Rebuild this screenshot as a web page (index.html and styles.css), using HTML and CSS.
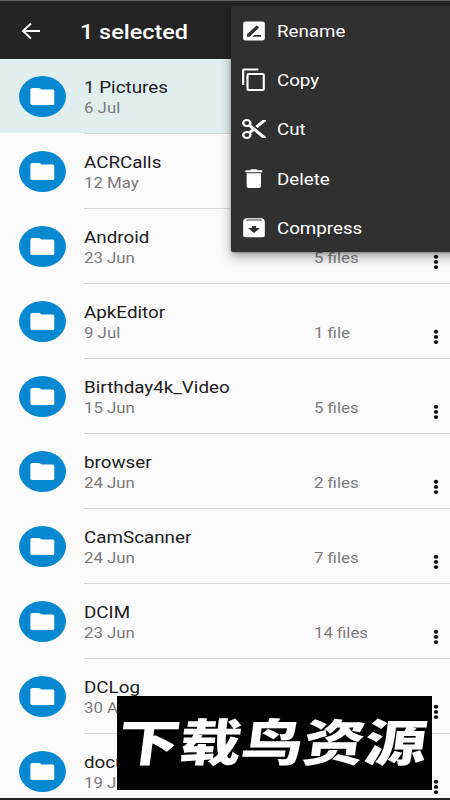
FILE: index.html
```
<!DOCTYPE html>
<html lang="en">
<head>
<meta charset="utf-8">
<title>File manager</title>
<link rel="stylesheet" href="styles.css">
</head>
<body>
<svg width="0" height="0" class="defs">
  <symbol id="folder" viewBox="0 0 47 41"><ellipse cx="23.5" cy="20.5" rx="23.5" ry="20.5" fill="#0788d1"/><path d="M13.200 12H19.800Q20.800 12 21.400 12.700L22.500 13.600H33.500Q35.300 13.600 35.300 15.200V27.500Q35.300 29 33.500 29H13.200Q11.400 29 11.400 27.500V13.600Q11.400 12 13.200 12Z" fill="#fff"/></symbol>
  <symbol id="dots" viewBox="0 0 6 16"><ellipse cx="3" cy="2.700" rx="2.200" ry="1.950"/><ellipse cx="3" cy="7.900" rx="2.200" ry="1.950"/><ellipse cx="3" cy="13.100" rx="2.200" ry="1.950"/></symbol>
</svg>
<div class="screen">
  <header class="bar">
    <svg class="back" viewBox="0 0 20 18"><path d="M19 9H2M10 1.500L2 9L10 16.500" fill="none" stroke="#fff" stroke-width="1.900"/></svg>
    <h1>1 selected</h1>
  </header>
  <main class="list" id="list"></main>
  <nav class="menu">
    <div class="item"><svg viewBox="0 0 24 24" preserveAspectRatio="none"><path fill-rule="evenodd" d="M4 2.500H20Q22 2.500 22 4.500V19.500Q22 21.500 20 21.500H4Q2 21.500 2 19.500V4.500Q2 2.500 4 2.500ZM5.500 15.200V17.800H8L16 9.200Q16.700 8.400 16 7.700L15.300 6.900Q14.500 6.200 13.800 6.900ZM12.300 15.900L10.400 17.800H18.500V15.900Z"/></svg><span>Rename</span></div>
    <div class="item"><svg viewBox="0 0 24 24" preserveAspectRatio="none"><path fill-rule="evenodd" d="M16 .5H3Q1 .5 1 2.500V17H3V2.500H16ZM20 5H7Q5 5 5 7V21Q5 23 7 23H20Q22 23 22 21V7Q22 5 20 5ZM20 21H7V7H20Z"/></svg><span>Copy</span></div>
    <div class="item"><svg class="wide" viewBox="2 2 20 20" preserveAspectRatio="none"><path d="M9.640 7.640c.23-.5.36-1.050.36-1.640 0-2.210-1.790-4-4-4S2 3.790 2 6s1.790 4 4 4c.59 0 1.140-.13 1.640-.36L10 12l-2.360 2.360C7.140 14.130 6.590 14 6 14c-2.210 0-4 1.790-4 4s1.790 4 4 4 4-1.790 4-4c0-.59-.13-1.140-.36-1.640L12 14l7 7h3v-1L9.640 7.640zM6 8c-1.100 0-2-.89-2-2s.9-2 2-2 2 .89 2 2-.9 2-2 2zm0 12c-1.100 0-2-.89-2-2s.9-2 2-2 2 .89 2 2-.9 2-2 2zm6-7.500c-.28 0-.5-.22-.5-.5s.22-.5.5-.5.5.22.5.5-.22.5-.5.5zM19 3l-6 6 2 2 7-7V3z"/></svg><span>Cut</span></div>
    <div class="item"><svg viewBox="0 0 24 24" preserveAspectRatio="none"><path d="M5.200 6.300H18.500V19Q18.500 21 16.500 21H7.200Q5.200 21 5.200 19ZM4 3.300H8.300L9.300 2.300H14.300L15.300 3.300H19.600V5.200H4Z"/></svg><span>Delete</span></div>
    <div class="item"><svg viewBox="0 0 24 24" preserveAspectRatio="none"><path fill-rule="evenodd" d="M4.500 2.300H19.500Q22 3.300 22 5.300V19.300Q22 21.300 20 21.300H4Q2 21.300 2 19.300V5.300Q2 3.300 4.500 2.300ZM4.500 4.400H19.500L18.600 3.600H5.400ZM10 10V12H6.500L12 17L17.500 12H14V10Z"/></svg><span>Compress</span></div>
  </nav>
  <div class="watermark" lang="zh"><span>下载鸟资源</span></div>
  <div class="bottom"></div>
</div>
<script src="app.js"></script>
</body>
</html>
```
FILE: app.js
```
const folders = [
  ["1 Pictures", "6 Jul", ""],
  ["ACRCalls", "12 May", ""],
  ["Android", "23 Jun", "5 files"],
  ["ApkEditor", "9 Jul", "1 file"],
  ["Birthday4k_Video", "15 Jun", "5 files"],
  ["browser", "24 Jun", "2 files"],
  ["CamScanner", "24 Jun", "7 files"],
  ["DCIM", "23 Jun", "14 files"],
  ["DCLog", "30 Apr", ""],
  ["documents", "19 Jul", ""]
];
document.getElementById("list").innerHTML = folders.map(([name, date, count], i) => `
  <div class="row${i === 0 ? " selected" : ""}">
    <svg class="folder"><use href="#folder"/></svg>
    <div class="info">
      <div class="name"><span>${name}</span></div>
      <div class="meta"><span class="date">${date}</span><span class="count">${count}</span></div>
      <svg class="dots"><use href="#dots"/></svg>
    </div>
  </div>`).join("");
```
FILE: styles.css
```
* { box-sizing: border-box; }
body { margin: 0; font-family: Roboto, "Liberation Sans", sans-serif; background: #fafafa; }
.defs { position: absolute; }
.screen { position: relative; width: 450px; height: 800px; overflow: hidden; }
.bar { display: flex; align-items: center; height: 59px; background: #242424; border-top: 1px solid #646464; padding: 2px 0 0 21px; }
.back { width: 20px; height: 18px; }
h1 { margin: 2px 0 0 39px; font-size: 20px; line-height: 24px; font-weight: 500; color: #fff; transform: scaleX(1.170); transform-origin: left; white-space: nowrap; }
.row { display: flex; height: 75px; padding-left: 19px; }
.folder { flex: none; width: 47px; height: 41px; margin-top: 16.500px; }
.info { position: relative; flex: 1; margin-left: 18px; padding-top: 18px; border-bottom: 1px solid #d6d6d6; }
.selected { background: linear-gradient(#e0eeee 74px, #fafafa 74px); }
.name { height: 21px; line-height: 21px; font-size: 16.5px; color: #202020; }
.meta { display: flex; height: 20px; line-height: 20px; font-size: 15px; color: #7b7b7b; }
.name span, .meta span { display: block; transform: scaleX(1.140); transform-origin: left; white-space: nowrap; }
.meta span { transform: scaleX(1.120); }
.date { width: 230px; flex: none; }
.dots { position: absolute; right: 11px; top: 45px; width: 6px; height: 16px; fill: #111; }
.menu { position: absolute; left: 231px; top: 6px; width: 230px; height: 246px; background: #303030; border-radius: 2px; box-shadow: 0 5px 12px rgba(0,0,0,.32), 0 1px 3px rgba(0,0,0,.3); }
.item { display: flex; align-items: center; height: 49.300px; padding-left: 10px; color: #fff; font-size: 16.300px; }
.item svg { width: 26px; height: 24px; fill: #fff; }
.item svg.wide { width: 24px; height: 20px; margin: 0 1px; }
.item span { margin: 1.500px 0 0 10px; transform: scaleX(1.150); transform-origin: left; }
.watermark { position: absolute; left: 117px; top: 696px; width: 315px; height: 94px; background: #000; color: #fff; display: flex; align-items: center; justify-content: center; }
.watermark span { font: 900 50px/90px "Noto Sans CJK SC", sans-serif; white-space: nowrap; transform: translate(-2px, -4px) scaleX(1.235) skewX(-6deg); }
.bottom { position: absolute; left: 0; right: 0; bottom: 0; height: 2px; background: #222; }
```
